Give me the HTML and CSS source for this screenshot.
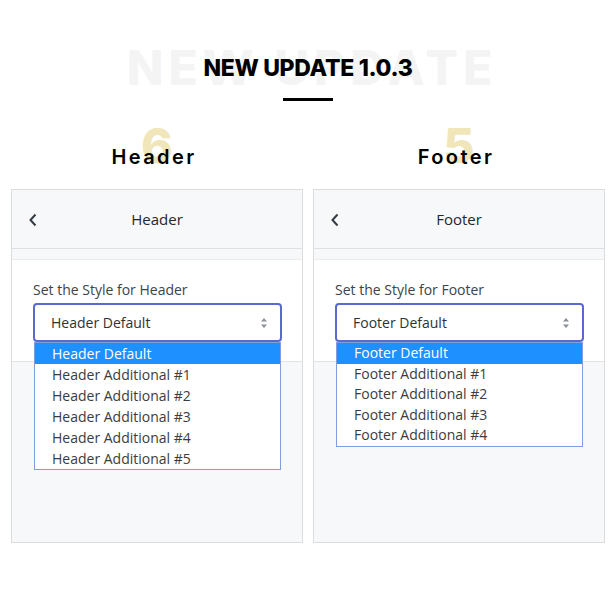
FILE: index.html
```html
<!DOCTYPE html>
<html lang="en">
<head>
  <meta charset="UTF-8" />
  <meta name="viewport" content="width=device-width, initial-scale=1.0"/>
  <title>New Update 1.0.3</title>
  <link rel="stylesheet" href="styles.css">
</head>
<body>

  <div class="hero">
    <div class="ghost">NEW UPDATE</div>
    <h1>NEW UPDATE 1.0.3</h1>
    <div class="bar"></div>
  </div>

  <div class="cols labels">
    <div class="label"><span class="num">6</span><span class="name">Header</span></div>
    <div class="label"><span class="num">5</span><span class="name">Footer</span></div>
  </div>

  <div class="cols">
    <div class="panel">
      <div class="panel-top">
        <svg class="back" width="10" height="14" viewBox="0 0 10 14"><polyline points="7.5,1.5 2.5,7 7.5,12.5" fill="none" stroke="#333a44" stroke-width="2"/></svg>
        <span class="title">Header</span>
      </div>
      <div class="gap"></div>
      <div class="body">
        <div class="field-label">Set the Style for Header</div>
        <div class="select">
          <span>Header Default</span>
          <svg class="arrows" width="8" height="12" viewBox="0 0 8 12"><path d="M4 1 L7 4.5 H1 Z M4 11 L7 7.5 H1 Z" fill="#8a8f99"/></svg>
        </div>
        <ul class="options">
          <li class="selected">Header Default</li>
          <li>Header Additional #1</li>
          <li>Header Additional #2</li>
          <li>Header Additional #3</li>
          <li>Header Additional #4</li>
          <li>Header Additional #5</li>
        </ul>
      </div>
    </div>

    <div class="panel">
      <div class="panel-top">
        <svg class="back" width="10" height="14" viewBox="0 0 10 14"><polyline points="7.5,1.5 2.5,7 7.5,12.5" fill="none" stroke="#333a44" stroke-width="2"/></svg>
        <span class="title">Footer</span>
      </div>
      <div class="gap"></div>
      <div class="body">
        <div class="field-label">Set the Style for Footer</div>
        <div class="select">
          <span>Footer Default</span>
          <svg class="arrows" width="8" height="12" viewBox="0 0 8 12"><path d="M4 1 L7 4.5 H1 Z M4 11 L7 7.5 H1 Z" fill="#8a8f99"/></svg>
        </div>
        <ul class="options short">
          <li class="selected">Footer Default</li>
          <li>Footer Additional #1</li>
          <li>Footer Additional #2</li>
          <li>Footer Additional #3</li>
          <li>Footer Additional #4</li>
        </ul>
      </div>
    </div>
  </div>

</body>
</html>
```

FILE: styles.css
```css
body {
  margin: 0;
  background: #fff;
  font-family: "Open Sans", Arial, sans-serif;
  color: #333;
}
.hero {
  position: relative;
  padding-top: 52px;
  text-align: center;
}
.ghost {
  position: absolute;
  left: 0;
  right: 0;
  top: 44px;
  padding-left: 8px;
  font-family: Inter, sans-serif;
  font-weight: 800;
  font-size: 48px;
  line-height: 48px;
  letter-spacing: 5px;
  color: #f4f4f4;
}
h1 {
  position: relative;
  margin: 0;
  font-family: Inter, sans-serif;
  font-weight: 800;
  font-size: 23px;
  line-height: 32px;
  letter-spacing: -0.3px;
  color: #000;
}
.bar {
  position: relative;
  width: 50px;
  height: 3px;
  margin: 14px auto 0;
  background: #000;
}
.cols {
  display: grid;
  grid-template-columns: 292px 292px;
  gap: 10px;
  padding-left: 11px;
}
.labels {
  margin-top: 44px;
  margin-bottom: 20px;
}
.label {
  position: relative;
  text-align: center;
  height: 24px;
  padding-right: 6px;
}
.num {
  position: absolute;
  left: 50%;
  top: -23px;
  transform: translateX(-50%);
  font-family: Inter, sans-serif;
  font-weight: 800;
  font-size: 48px;
  line-height: 48px;
  color: #f1e6b9;
}
.name {
  position: relative;
  font-family: Inter, sans-serif;
  font-weight: 600;
  font-size: 20px;
  line-height: 24px;
  letter-spacing: 2.4px;
  color: #000;
}
.panel {
  height: 352px;
  border: 1px solid #dcdcdc;
  background: #f7f8fa;
}
.panel-top {
  position: relative;
  height: 58px;
  display: flex;
  align-items: center;
  justify-content: center;
  border-bottom: 1px solid #dfe0e3;
}
.back {
  position: absolute;
  left: 16px;
  top: 23px;
}
.title {
  font-size: 15px;
  color: #23282d;
}
.gap {
  height: 10px;
  border-bottom: 1px solid #ebecee;
}
.body {
  position: relative;
  height: 102px;
  padding: 20px 20px 0 21px;
  box-sizing: border-box;
  background: #fff;
  border-bottom: 1px solid #e2e3e5;
}
.field-label {
  font-size: 14px;
  line-height: 20px;
  color: #3c434a;
}
.select {
  margin-top: 3px;
  height: 39px;
  box-sizing: border-box;
  border: 2px solid #5b68cf;
  border-radius: 4px;
  display: flex;
  align-items: center;
  justify-content: space-between;
  padding: 0 12px 0 16px;
  font-size: 14px;
  color: #2c3338;
  background: #fff;
}
.options {
  position: absolute;
  left: 22px;
  right: 21px;
  top: 82px;
  margin: 0;
  padding: 0;
  list-style: none;
  border: 1px solid #7f9ee0;
  background: #fff;
}
.options li {
  height: 21px;
  line-height: 21px;
  padding-left: 17px;
  font-size: 14px;
  color: #3c3c3c;
}
.options.short li {
  height: 20.6px;
  line-height: 20.6px;
}
.options li.selected {
  background: #1e90ff;
  color: #fff;
}
```
